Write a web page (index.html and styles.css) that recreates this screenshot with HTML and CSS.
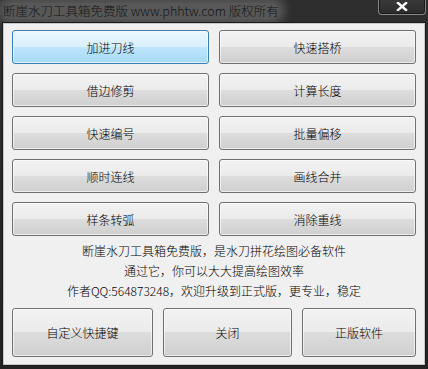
FILE: index.html
```html
<!DOCTYPE html>
<html lang="zh-CN">
<head>
<meta charset="utf-8">
<title>断崖水刀工具箱免费版</title>
<link rel="stylesheet" href="styles.css">
</head>
<body>
<div class="window">
  <div class="titlebar">
    <span class="title">断崖水刀工具箱免费版 www.phhtw.com 版权所有</span>
    <div class="close">
      <svg width="12" height="9" viewBox="0 0 12 9"><path d="M2 1 L10 8 M10 1 L2 8" stroke="#fff" stroke-width="2.4" stroke-linecap="square"/></svg>
    </div>
  </div>
  <div class="content">
    <div class="grid">
      <button class="btn active">加进刀线</button>
      <button class="btn">快速搭桥</button>
      <button class="btn">借边修剪</button>
      <button class="btn">计算长度</button>
      <button class="btn">快速编号</button>
      <button class="btn">批量偏移</button>
      <button class="btn">顺时连线</button>
      <button class="btn">画线合并</button>
      <button class="btn">样条转弧</button>
      <button class="btn">消除重线</button>
    </div>
    <div class="info">
      <p>断崖水刀工具箱免费版，是水刀拼花绘图必备软件</p>
      <p>通过它，你可以大大提高绘图效率</p>
      <p>作者QQ:564873248，欢迎升级到正式版，更专业，稳定</p>
    </div>
    <div class="bottom">
      <button class="btn big w1">自定义快捷键</button>
      <button class="btn big w2">关闭</button>
      <button class="btn big w3">正版软件</button>
    </div>
  </div>
</div>
</body>
</html>
```
FILE: styles.css
```css
* { box-sizing: border-box; }
html, body { margin: 0; padding: 0; }
body {
  width: 428px;
  height: 369px;
  overflow: hidden;
  background: #262626;
  font-family: "Noto Sans CJK SC", "Noto Sans", sans-serif;
}
.window {
  width: 428px;
  height: 369px;
  background: linear-gradient(180deg, #2e2e2e 0%, #232323 100%);
  display: flex;
  flex-direction: column;
}
.titlebar {
  height: 23px;
  display: flex;
  align-items: flex-start;
  justify-content: space-between;
  padding-left: 3px;
}
.title {
  margin-top: 3px;
  font-size: 12.5px;
  font-weight: 300;
  line-height: 16px;
  color: #161616;
  white-space: nowrap;
  background: rgba(140, 140, 140, 0.45);
  box-shadow: 0 0 10px 6px rgba(140, 140, 140, 0.45);
  border-radius: 8px;
}
.close {
  width: 48px;
  height: 16px;
  margin-right: 2px;
  margin-top: -1px;
  border: 1px solid #858585;
  border-top: none;
  border-radius: 0 0 4px 4px;
  background: linear-gradient(180deg, #3a3a3a, #2c2c2c);
  box-shadow: inset 0 0 0 1px #1b1b1b;
  display: flex;
  align-items: center;
  justify-content: center;
}
.close svg { display: block; margin-top: -1px; }
.content {
  margin: 0 3px;
  height: 342px;
  background: #f0f0f0;
  border: 1px solid #c8c8c8;
  box-shadow: 0 0 0 1px #1a1a1a;
  padding: 6px 8px 0 8px;
  display: flex;
  flex-direction: column;
}
.grid {
  display: grid;
  grid-template-columns: 197px 197px;
  grid-auto-rows: 34px;
  column-gap: 10px;
  row-gap: 9px;
}
.btn {
  font-family: "Noto Sans CJK SC", "Noto Sans", sans-serif;
  font-size: 12px;
  font-weight: 300;
  color: #000;
  border: 1px solid #707070;
  border-radius: 3px;
  background: linear-gradient(180deg, #f2f2f2 0%, #ebebeb 49%, #dddddd 50%, #cfcfcf 100%);
  box-shadow: inset 0 0 0 1px rgba(255, 255, 255, 0.6);
  padding: 0;
  margin: 0;
}
.btn.active {
  border-color: #3c7fb1;
  background: linear-gradient(180deg, #eaf6fd 0%, #d9f0fc 49%, #bee6fd 50%, #a7d9f5 100%);
}
.info {
  margin-top: 5px;
  text-align: center;
  font-size: 12px;
  font-weight: 300;
  line-height: 20px;
  color: #000;
}
.info p { margin: 0; }
.bottom {
  margin-top: 7px;
  display: flex;
  gap: 10px;
}
.btn.big { height: 49px; }
.w1 { width: 141px; }
.w2 { width: 129px; }
.w3 { width: 114px; }
```
